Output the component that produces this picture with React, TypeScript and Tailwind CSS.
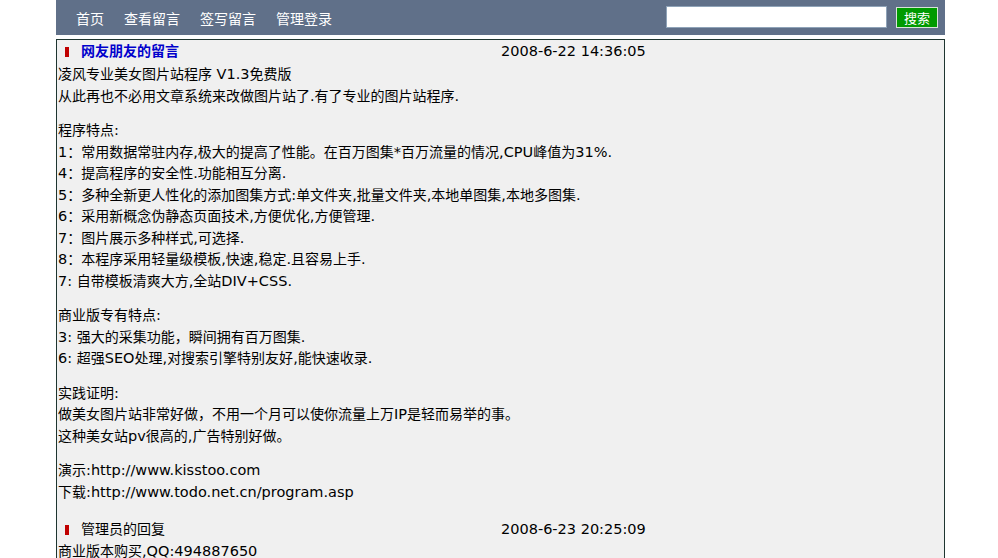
import React from "react";

const CJK = /([\u3000-\u303f\u3400-\u9fff\uff00-\uffef]+)/;

function T({ s }: { s: string }) {
  const parts = s.split(CJK);
  return (
    <>
      {parts.map((p, i) =>
        i % 2 === 1 ? (
          <span key={i} className="text-[14px] leading-none font-['Noto_Sans_CJK_SC',sans-serif]">
            {p}
          </span>
        ) : (
          <React.Fragment key={i}>{p}</React.Fragment>
        )
      )}
    </>
  );
}

function Para({ lines }: { lines: string[] }) {
  return (
    <div className="mb-[13px]">
      {lines.map((l, i) => (
        <div key={i} className="whitespace-pre">
          <T s={l} />
        </div>
      ))}
    </div>
  );
}

function Head({ title, date, bold }: { title: string; date: string; bold?: boolean }) {
  return (
    <div className="flex h-[22px] items-center">
      <div className="flex w-[443px] items-center">
        <span className="ml-[7px] mr-[12px] inline-block h-[10px] w-[4px] bg-[#c00000]" />
        <span className={bold ? "font-bold text-[#0000cc]" : "text-black"}>
          <T s={title} />
        </span>
      </div>
      <div className="text-black">{date}</div>
    </div>
  );
}

export default function App() {
  const nav = ["首页", "查看留言", "签写留言", "管理登录"];
  return (
    <div className="min-h-[558px] bg-white font-['DejaVu_Sans','Noto_Sans_CJK_SC',sans-serif] text-[14.5px] text-black">
      <div className="ml-[56px] w-[889px]">
        <div className="flex h-[35px] items-center bg-[#607089] pl-[10px] pr-[7px]">
          {nav.map((n) => (
            <span key={n} className="px-[10px] text-[14px] leading-none text-white font-['Noto_Sans_CJK_SC',sans-serif]">
              {n}
            </span>
          ))}
          <div className="ml-auto flex items-center gap-[9px] pb-[1px]">
            <input className="h-[22px] w-[221px] border border-[#8fa3b8] bg-white outline-none" />
            <button className="flex h-[21px] w-[42px] items-center justify-center border border-[#d8e4d8] bg-[#009a00] text-[13px] leading-none text-white font-['Noto_Sans_CJK_SC',sans-serif]">
              搜索
            </button>
          </div>
        </div>
        <div className="mt-[4px] h-[600px] border border-[#1e3530] bg-[#f0f0f0] pl-[1px] leading-[21.5px]">
          <div className="pt-[1px]">
            <Head title="网友朋友的留言" date="2008-6-22 14:36:05" bold />
          </div>
          <div className="mt-[1px]">
            <Para lines={["凌风专业美女图片站程序 V1.3免费版", "从此再也不必用文章系统来改做图片站了.有了专业的图片站程序."]} />
            <Para
              lines={[
                "程序特点:",
                "1：常用数据常驻内存,极大的提高了性能。在百万图集*百万流量的情况,CPU峰值为31%.",
                "4：提高程序的安全性.功能相互分离.",
                "5：多种全新更人性化的添加图集方式:单文件夹,批量文件夹,本地单图集,本地多图集.",
                "6：采用新概念伪静态页面技术,方便优化,方便管理.",
                "7：图片展示多种样式,可选择.",
                "8：本程序采用轻量级模板,快速,稳定.且容易上手.",
                "7: 自带模板清爽大方,全站DIV+CSS.",
              ]}
            />
            <Para lines={["商业版专有特点:", "3: 强大的采集功能，瞬间拥有百万图集.", "6: 超强SEO处理,对搜索引擎特别友好,能快速收录."]} />
            <Para lines={["实践证明:", "做美女图片站非常好做，不用一个月可以使你流量上万IP是轻而易举的事。", "这种美女站pv很高的,广告特别好做。"]} />
            <div>
              <div><T s="演示:http://www.kisstoo.com" /></div>
              <div><T s="下载:http://www.todo.net.cn/program.asp" /></div>
            </div>
          </div>
          <div className="mt-[16px]">
            <Head title="管理员的回复" date="2008-6-23 20:25:09" />
          </div>
          <div><T s="商业版本购买,QQ:494887650" /></div>
        </div>
      </div>
    </div>
  );
}
